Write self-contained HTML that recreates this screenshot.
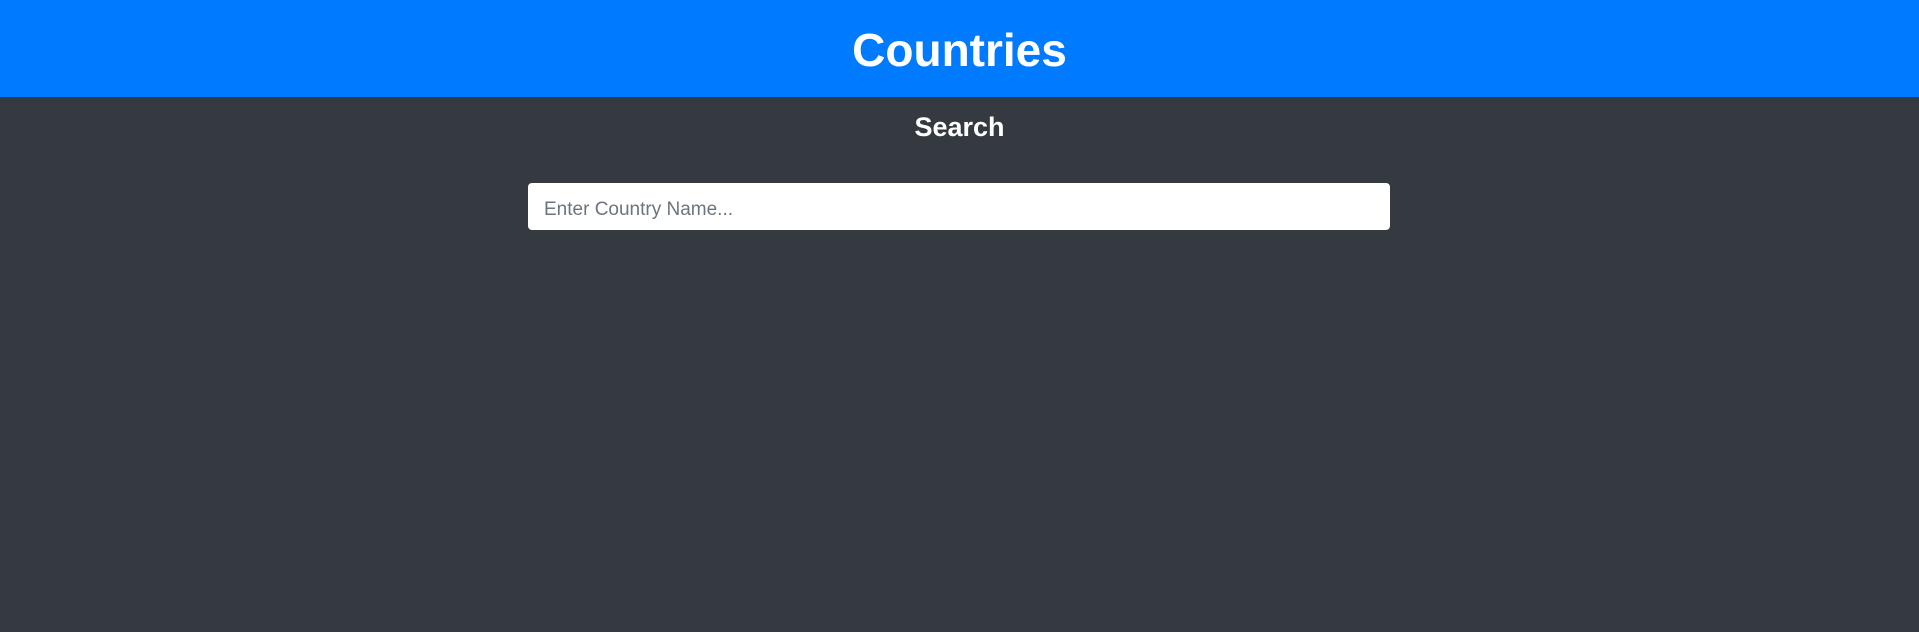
<!DOCTYPE html>
<html><head><meta charset="utf-8"><style>
html,body{margin:0;padding:0;width:1919px;height:632px;background:#343a40;overflow:hidden;font-family:"Segoe UI","Liberation Sans",sans-serif;}
.hdr{height:97px;background:#007bff;color:#fff;text-align:center;font-weight:bold;font-size:46px;line-height:101px;}
h2{margin:0;position:absolute;top:107px;width:100%;text-align:center;color:#fff;font-size:27px;font-weight:bold;line-height:40px;}
.inp{position:absolute;left:528px;top:183px;width:862px;height:47px;background:#fff;border-radius:4px;box-sizing:border-box;padding-left:16px;padding-top:3px;line-height:47px;color:#6c757d;font-size:19px;}
</style></head><body>
<div class="hdr">Countries</div>
<h2>Search</h2>
<div class="inp">Enter Country Name...</div>
</body></html>
